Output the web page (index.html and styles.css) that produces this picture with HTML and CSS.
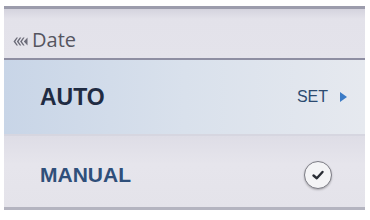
FILE: index.html
```html
<!DOCTYPE html>
<html lang="en">
<head>
    <meta charset="UTF-8">
    <title>Date</title>
    <link rel="stylesheet" href="styles.css">
</head>
<body>
    <div class="panel">
        <div class="header">
            <svg class="back" width="15" height="9" viewBox="0 0 15 9">
                <path d="M3.5 0.5 L0.5 4.5 L3.5 8.5 L5 8.5 L2.3 4.5 L5 0.5 Z" fill="#6b6b78"/>
                <path d="M6.8 0.5 L3.8 4.5 L6.8 8.5 L8.3 8.5 L5.6 4.5 L8.3 0.5 Z" fill="#6b6b78"/>
                <path d="M10.1 0.5 L7.1 4.5 L10.1 8.5 L11.6 8.5 L8.9 4.5 L11.6 0.5 Z" fill="#6b6b78"/>
                <path d="M14.5 0.5 L10.8 4.5 L14.5 8.5 Z" fill="#6b6b78"/>
            </svg>
            <span class="title">Date</span>
        </div>

        <div class="row row-auto">
            <span class="row-label">AUTO</span>
            <span class="set">SET <span class="arrow"></span></span>
        </div>

        <div class="row row-manual">
            <span class="row-label">MANUAL</span>
            <span class="check">
                <svg width="24" height="24" viewBox="0 0 24 24">
                    <path d="M7.5 12.5 L10.8 15.2 L16.5 9" fill="none" stroke="#2a2d35" stroke-width="2.4" stroke-linecap="round" stroke-linejoin="round"/>
                </svg>
            </span>
        </div>
    </div>
</body>
</html>
```

FILE: styles.css
```css
* {
    margin: 0;
    padding: 0;
    box-sizing: border-box;
}

body {
    background: #fff;
    width: 370px;
    height: 220px;
    padding: 6px 5px 0 4px;
    font-family: 'Liberation Sans', Arial, sans-serif;
}

.panel {
    background: #e3e2ea;
}

.header {
    height: 54px;
    display: flex;
    align-items: flex-end;
    padding: 0 0 6px 9px;
    border-top: 3px solid #9c9cac;
    background: linear-gradient(180deg, #d4d3de 0%, #e3e2ea 20%, #e4e3eb 100%);
    border-bottom: 2px solid #8e8ea2;
}

.back {
    margin-right: 4px;
    margin-bottom: 6px;
}

.title {
    font-family: 'Open Sans', sans-serif;
    font-size: 20px;
    color: #55555f;
    line-height: 24px;
}

.row {
    display: flex;
    align-items: center;
    justify-content: space-between;
    padding: 0 18px 0 36px;
}

.row-auto {
    height: 76px;
    background: linear-gradient(90deg, #c8d5e7 0%, #d9e1ec 50%, #e6e9ef 100%);
    border-bottom: 2px solid #d6d6e0;
}

.row-auto .row-label {
    font-size: 23px;
    font-weight: bold;
    color: #1f2b42;
}

.set {
    display: flex;
    align-items: center;
    font-size: 16px;
    color: #2c4a70;
}

.arrow {
    width: 0;
    height: 0;
    border-top: 5.5px solid transparent;
    border-bottom: 5.5px solid transparent;
    border-left: 7px solid #3b7bc6;
    margin-left: 12px;
}

.row-manual {
    height: 74px;
    padding-top: 6px;
    background: linear-gradient(180deg, #dedde6 0%, #e6e5ec 40%, #e4e3ea 100%);
    border-bottom: 3px solid #b4b4c0;
}

.row-manual .row-label {
    font-size: 21px;
    font-weight: bold;
    color: #2f4f7a;
}

.check {
    width: 28px;
    height: 28px;
    border-radius: 50%;
    border: 1.5px solid #7d7d86;
    background: #f4f4f6;
    box-shadow: 0 1px 2px rgba(0, 0, 0, 0.25);
    display: flex;
    align-items: center;
    justify-content: center;
    margin-right: 15px;
}
```
